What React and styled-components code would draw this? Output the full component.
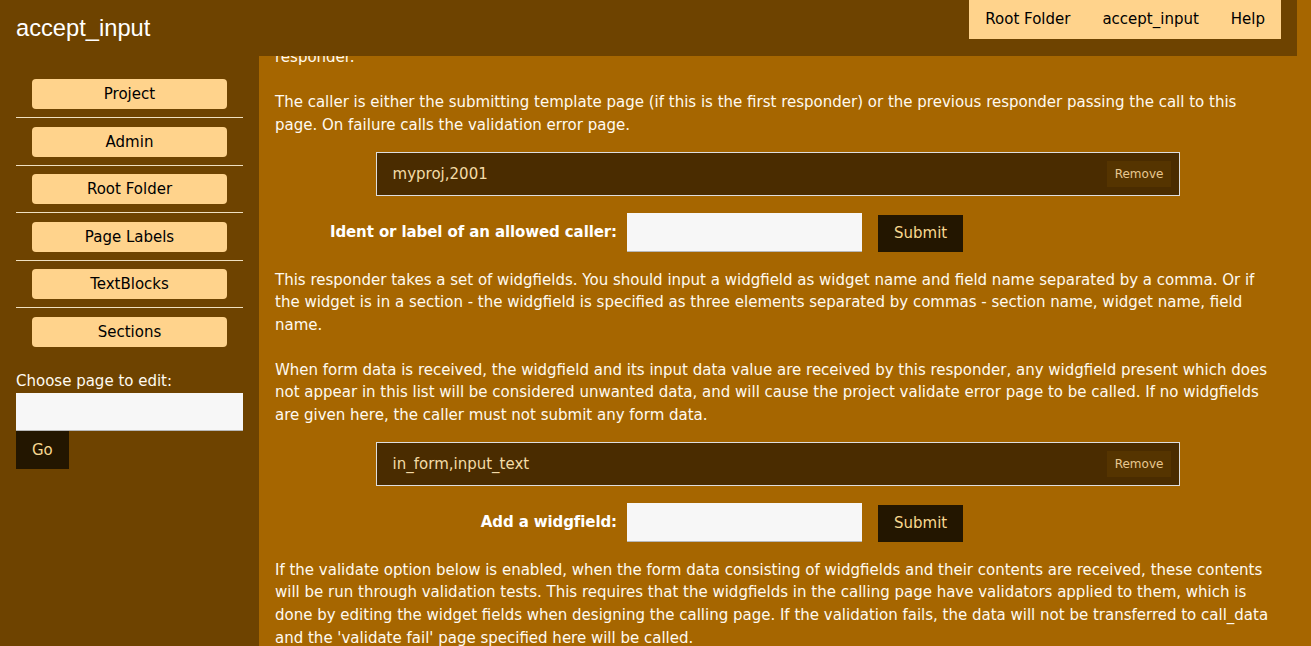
import React from 'react';
import styled, { createGlobalStyle } from 'styled-components';

const GlobalStyle = createGlobalStyle`
  html, body {
    margin: 0;
    padding: 0;
    background-color: #a66600;
    font-family: 'DejaVu Sans', Verdana, sans-serif;
    font-size: 15px;
    overflow: hidden;
  }
`;

const StyledPage = styled.div`
  width: 100%;
  height: 646px;
  display: flex;
  flex-direction: column;
`;

const StyledHeader = styled.header`
  width: calc(100% - 14px);
  height: 56px;
  flex: 0 0 56px;
  background-color: #6e4300;
  display: flex;
  justify-content: space-between;
  align-items: flex-start;
`;

const StyledTitle = styled.h1`
  margin: 16px;
  font-family: 'Liberation Sans', Arial, sans-serif;
  font-weight: normal;
  font-size: 23.7px;
  line-height: 24px;
  color: #ffffff;
`;

const StyledNav = styled.nav`
  display: flex;
  height: 39px;
  margin-right: 16px;
  background-color: #ffd38c;
`;

const StyledNavLink = styled.a`
  padding: 0 16px;
  line-height: 39px;
  color: #000000;
  text-decoration: none;
`;

const StyledBody = styled.div`
  flex: 1;
  display: grid;
  grid-template-columns: 259px 1fr;
  min-height: 0;
`;

const StyledSidebar = styled.aside`
  background-color: #6e4300;
  padding: 23px 16px;
  display: flex;
  flex-direction: column;

  & > * {
    flex-shrink: 0;
  }
`;

const StyledSideButton = styled.a`
  display: block;
  height: 30px;
  line-height: 30px;
  margin: 0 16px;
  border-radius: 4px;
  background-color: #ffd38c;
  color: #000000;
  text-align: center;
  text-decoration: none;
`;

const StyledRule = styled.hr`
  margin: 8.25px 0;
  border: 0;
  height: 1px;
  background-color: #f0e0c0;
`;

const StyledSideLabel = styled.label`
  margin-top: 23.5px;
  line-height: 23px;
  color: #fffaf0;
`;

const StyledTextInput = styled.input`
  box-sizing: border-box;
  width: ${({ wide }) => (wide ? '100%' : '235px')};
  height: ${({ wide }) => (wide ? '38px' : '39px')};
  border: 0;
  border-bottom: 1px solid #b8b8b8;
  background-color: #f7f7f7;
  padding: 0 8px;
  font-family: inherit;
  font-size: 15px;
`;

const StyledDarkButton = styled.button`
  height: ${({ tall }) => (tall ? '38px' : '37px')};
  padding: 0 16px;
  border: 0;
  background-color: #231600;
  color: #f8d890;
  font-family: inherit;
  font-size: 15px;
  align-self: ${({ tall }) => (tall ? 'flex-start' : 'auto')};
`;

const StyledMain = styled.main`
  overflow: hidden;
  padding: 0 30px 0 16px;
  display: flex;
  flex-direction: column;

  & > * {
    flex-shrink: 0;
  }
`;

const StyledParagraph = styled.p`
  margin: ${({ gap }) => gap}px 0 0;
  line-height: 22.67px;
  color: #fffaf0;
`;

const StyledEntry = styled.div`
  box-sizing: border-box;
  width: 80%;
  height: 44px;
  margin: 14.9px auto 0;
  padding: 0 8px 0 16px;
  border: 1px solid #dedede;
  background-color: #4a2c00;
  display: flex;
  justify-content: space-between;
  align-items: center;
  color: #f3dba6;
`;

const StyledRemove = styled.button`
  height: 26px;
  padding: 0 8px;
  border: 0;
  background-color: #553400;
  color: #e8c890;
  font-family: inherit;
  font-size: 12px;
`;

const StyledFormRow = styled.form`
  margin-top: 17px;
  display: grid;
  grid-template-columns: 342px 235px auto;
  column-gap: 10px;
  align-items: end;
  justify-items: start;

  button {
    margin-left: 6px;
  }
`;

const StyledFormLabel = styled.label`
  justify-self: end;
  align-self: center;
  font-weight: bold;
  letter-spacing: -0.1px;
  color: #ffffff;
`;

const sideLinks = ['Project', 'Admin', 'Root Folder', 'Page Labels', 'TextBlocks', 'Sections'];

const Entry = ({ value }) => (
  <StyledEntry>
    <span>{value}</span>
    <StyledRemove type="button">Remove</StyledRemove>
  </StyledEntry>
);

const FormRow = ({ label }) => (
  <StyledFormRow onSubmit={e => e.preventDefault()}>
    <StyledFormLabel>{label}</StyledFormLabel>
    <StyledTextInput type="text" />
    <StyledDarkButton type="submit">Submit</StyledDarkButton>
  </StyledFormRow>
);

const App = () => (
  <>
    <GlobalStyle />
    <StyledPage>
      <StyledHeader>
        <StyledTitle>accept_input</StyledTitle>
        <StyledNav>
          <StyledNavLink href="#">Root Folder</StyledNavLink>
          <StyledNavLink href="#">accept_input</StyledNavLink>
          <StyledNavLink href="#">Help</StyledNavLink>
        </StyledNav>
      </StyledHeader>
      <StyledBody>
        <StyledSidebar>
          {sideLinks.map((link, i) => (
            <React.Fragment key={link}>
              {i > 0 && <StyledRule />}
              <StyledSideButton href="#">{link}</StyledSideButton>
            </React.Fragment>
          ))}
          <StyledSideLabel>Choose page to edit:</StyledSideLabel>
          <StyledTextInput type="text" wide />
          <StyledDarkButton type="button" tall>
            Go
          </StyledDarkButton>
        </StyledSidebar>
        <StyledMain>
          {/* page is scrolled: tail of the previous paragraph sits under the header */}
          <StyledParagraph gap={-10}>responder.</StyledParagraph>
          <StyledParagraph gap={22.6}>
            The caller is either the submitting template page (if this is the first responder) or the previous
            responder passing the call to this page. On failure calls the validation error page.
          </StyledParagraph>
          <Entry value="myproj,2001" />
          <FormRow label="Ident or label of an allowed caller:" />
          <StyledParagraph gap={17.2}>
            This responder takes a set of widgfields. You should input a widgfield as widget name and field name
            separated by a comma. Or if the widget is in a section - the widgfield is specified as three elements
            separated by commas - section name, widget name, field name.
          </StyledParagraph>
          <StyledParagraph gap={22}>
            When form data is received, the widgfield and its input data value are received by this responder, any
            widgfield present which does not appear in this list will be considered unwanted data, and will cause the
            project validate error page to be called. If no widgfields are given here, the caller must not submit any
            form data.
          </StyledParagraph>
          <Entry value="in_form,input_text" />
          <FormRow label="Add a widgfield:" />
          <StyledParagraph gap={17.2}>
            If the validate option below is enabled, when the form data consisting of widgfields and their contents
            are received, these contents will be run through validation tests. This requires that the widgfields in
            the calling page have validators applied to them, which is done by editing the widget fields when
            designing the calling page. If the validation fails, the data will not be transferred to call_data and
            the 'validate fail' page specified here will be called.
          </StyledParagraph>
        </StyledMain>
      </StyledBody>
    </StyledPage>
  </>
);

export default App;
